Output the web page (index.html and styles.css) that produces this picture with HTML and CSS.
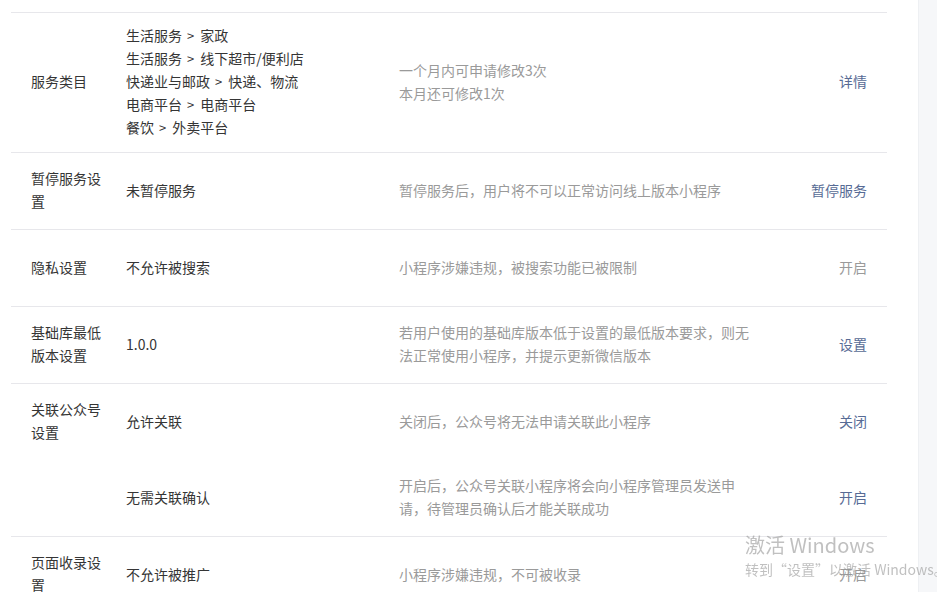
FILE: index.html
```html
<!DOCTYPE html>
<html lang="zh-CN">
<head>
  <meta charset="UTF-8" />
  <title>设置</title>
  <link rel="stylesheet" href="styles.css">
</head>
<body>
  <div class="page">
    <div class="main">
      <table class="setting-table">
        <tr>
          <td class="label">服务类目</td>
          <td class="value">
            <div>生活服务<span class="sep">&gt;</span>家政</div>
            <div>生活服务<span class="sep">&gt;</span>线下超市/便利店</div>
            <div>快递业与邮政<span class="sep">&gt;</span>快递、物流</div>
            <div>电商平台<span class="sep">&gt;</span>电商平台</div>
            <div>餐饮<span class="sep">&gt;</span>外卖平台</div>
          </td>
          <td class="desc">一个月内可申请修改3次<br>本月还可修改1次</td>
          <td class="action"><a href="#">详情</a></td>
        </tr>
        <tr>
          <td class="label">暂停服务设置</td>
          <td class="value">未暂停服务</td>
          <td class="desc">暂停服务后，用户将不可以正常访问线上版本小程序</td>
          <td class="action"><a href="#">暂停服务</a></td>
        </tr>
        <tr>
          <td class="label">隐私设置</td>
          <td class="value">不允许被搜索</td>
          <td class="desc">小程序涉嫌违规，被搜索功能已被限制</td>
          <td class="action"><span class="disabled">开启</span></td>
        </tr>
        <tr>
          <td class="label">基础库最低版本设置</td>
          <td class="value">1.0.0</td>
          <td class="desc">若用户使用的基础库版本低于设置的最低版本要求，则无法正常使用小程序，并提示更新微信版本</td>
          <td class="action"><a href="#">设置</a></td>
        </tr>
        <tr class="no-line">
          <td class="label">关联公众号设置</td>
          <td class="value">允许关联</td>
          <td class="desc">关闭后，公众号将无法申请关联此小程序</td>
          <td class="action"><a href="#">关闭</a></td>
        </tr>
        <tr>
          <td class="label"></td>
          <td class="value">无需关联确认</td>
          <td class="desc">开启后，公众号关联小程序将会向小程序管理员发送申请，待管理员确认后才能关联成功</td>
          <td class="action"><a href="#">开启</a></td>
        </tr>
        <tr>
          <td class="label">页面收录设置</td>
          <td class="value">不允许被推广</td>
          <td class="desc">小程序涉嫌违规，不可被收录</td>
          <td class="action"><span class="disabled">开启</span></td>
        </tr>
      </table>
    </div>
    <div class="side"></div>
  </div>

  <div class="watermark">
    <div class="wm-title">激活 Windows</div>
    <div class="wm-sub">转到“设置”以激活 Windows。</div>
  </div>
</body>
</html>
```

FILE: styles.css
```css
html, body {
  margin: 0;
  height: 100%;
  overflow: hidden;
}
body {
  font-family: "Noto Sans CJK SC", "Noto Sans", sans-serif;
  font-size: 14px;
  color: #353535;
  background: #fff;
}
.page {
  display: flex;
  min-height: 100%;
}
.main {
  width: 907px;
  padding: 12px 0 0 11px;
  background: #fff;
}
.side {
  flex: 1;
  background: #f6f7f9;
  border-left: 1px solid #eef0f3;
}
.setting-table {
  width: 876px;
  border-collapse: collapse;
  border-top: 1px solid #e7e7eb;
  line-height: 23px;
}
.setting-table tr {
  border-bottom: 1px solid #e7e7eb;
}
.setting-table tr.no-line {
  border-bottom: none;
}
.setting-table td {
  height: 52px;
  padding: 11px 0 13px;
  vertical-align: middle;
}
.label {
  width: 75px;
  padding-left: 20px !important;
  padding-right: 20px !important;
  color: #353535;
}
.value {
  width: 273px;
}
.sep {
  margin: 0 6px 0 5px;
  font-size: 13px;
}
.desc {
  width: 360px;
  color: #9a9a9a;
}
.action {
  text-align: right;
  padding-right: 20px !important;
}
.action a {
  color: #576b95;
  text-decoration: none;
}
.action .disabled {
  color: #9a9a9a;
}
.watermark {
  position: fixed;
  left: 745px;
  top: 532px;
  color: rgba(150, 150, 150, 0.6);
  font-family: "Noto Sans CJK SC", "Noto Sans", sans-serif;
  pointer-events: none;
  white-space: nowrap;
}
.wm-title {
  font-size: 20px;
  line-height: 26px;
}
.wm-sub {
  font-size: 14px;
  line-height: 22px;
}
```
